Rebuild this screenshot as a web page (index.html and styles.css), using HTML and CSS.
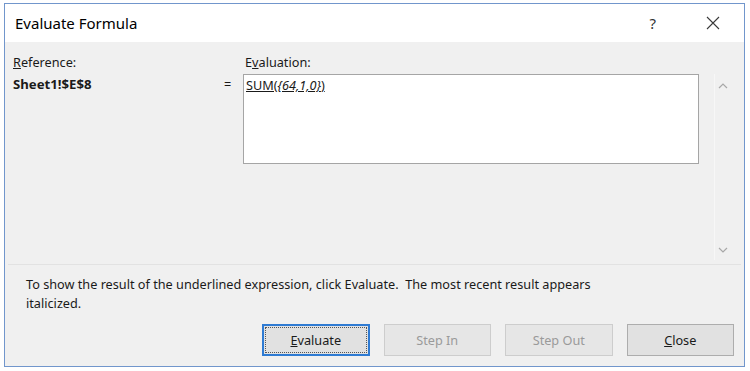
FILE: index.html
```html
<!DOCTYPE html>
<html lang="en">
<head>
    <meta charset="UTF-8">
    <title>Evaluate Formula</title>
    <link rel="stylesheet" href="styles.css">
</head>
<body>
    <div class="window">
        <div class="titlebar">
            <span class="title">Evaluate Formula</span>
            <span class="help">?</span>
            <span class="close-x">
                <svg width="14" height="14" viewBox="0 0 14 14">
                    <path d="M1 1 L13 13 M13 1 L1 13" stroke="#3a3a3a" stroke-width="1.1" fill="none"/>
                </svg>
            </span>
        </div>

        <div class="content">
            <div class="eval-area">
                <div class="label ref-label"><u>R</u>eference:</div>
                <div class="label eval-label">E<u>v</u>aluation:</div>
                <div class="ref-value">Sheet1!$E$8</div>
                <div class="equals">=</div>
                <div class="eval-box">
                    <u>SUM(<i>{64,1,0}</i>)</u>
                </div>
                <div class="scrollbar">
                    <svg width="10" height="6" viewBox="0 0 10 6">
                        <path d="M1 5 L5 1 L9 5" stroke="#a8a8a8" stroke-width="1.2" fill="none"/>
                    </svg>
                    <svg width="10" height="6" viewBox="0 0 10 6">
                        <path d="M1 1 L5 5 L9 1" stroke="#a8a8a8" stroke-width="1.2" fill="none"/>
                    </svg>
                </div>
            </div>

            <div class="footer">
                <p class="hint">To show the result of the underlined expression, click Evaluate.&nbsp; The most recent result appears italicized.</p>
                <div class="buttons">
                    <button class="btn btn-default"><span class="focus"><u>E</u>valuate</span></button>
                    <button class="btn" disabled>Step In</button>
                    <button class="btn" disabled>Step Out</button>
                    <button class="btn"><u>C</u>lose</button>
                </div>
            </div>
        </div>
    </div>
</body>
</html>
```

FILE: styles.css
```css
* {
    margin: 0;
    padding: 0;
    box-sizing: border-box;
}

body {
    font-family: "Noto Sans", "Open Sans", sans-serif;
    font-size: 12.7px;
    color: #1a1a1a;
    background: #fff;
    padding: 3px 0 0 4px;
}

.window {
    width: 741px;
    height: 364px;
    border: 1px solid #7196cc;
    background: #f0f0f0;
    display: flex;
    flex-direction: column;
}

.titlebar {
    height: 38px;
    background: #fff;
    display: flex;
    align-items: center;
    padding-left: 10px;
    flex-shrink: 0;
}

.title {
    font-size: 15px;
    color: #000;
    flex: 1;
}

.help {
    font-size: 15px;
    color: #333;
    margin-right: 50px;
}

.close-x {
    display: flex;
    margin-right: 24px;
}

.content {
    flex: 1;
    display: flex;
    flex-direction: column;
}

.eval-area {
    display: grid;
    grid-template-columns: 210px 20px 456px;
    grid-template-rows: 20px 90px;
    padding: 12px 0 0 5px;
    height: 223px;
    border-bottom: 1px solid #e2e2e2;
    margin: 0 3px;
    position: relative;
}

.label {
    line-height: 16px;
}

.ref-label {
    grid-column: 1 / 3;
}

.eval-label {
    grid-column: 3;
    padding-left: 2px;
}

.ref-value {
    grid-column: 1;
    font-weight: bold;
    font-size: 13.2px;
    padding-top: 1px;
}

.equals {
    grid-column: 2;
    padding-top: 1px;
    padding-left: 1px;
}

.eval-box {
    grid-column: 3;
    background: #fff;
    border: 1px solid #a5a5a5;
    padding: 1px 2px;
    height: 90px;
}

/* scroll arrows sit over the right edge of the panel */
.scrollbar {
    position: absolute;
    left: 706px;
    top: 32px;
    width: 16px;
    height: 186px;
    border-left: 1px solid #f7f7f7;
    display: flex;
    flex-direction: column;
    justify-content: space-between;
    align-items: center;
    padding: 9px 0 7px;
}

.footer {
    padding: 10px 0 0 21px;
}

.hint {
    line-height: 19px;
    width: 600px;
}

.buttons {
    display: flex;
    gap: 14px;
    padding-left: 236px;
    margin-top: 11px;
}

.btn {
    font-family: inherit;
    font-size: 12.7px;
    width: 107.5px;
    height: 32px;
    background: #e1e1e1;
    border: 1px solid #adadad;
    color: #1a1a1a;
}

.btn:disabled {
    background: #e6e6e6;
    border-color: #cdcdcd;
    color: #9a9a9a;
}

.btn-default {
    border: 2px solid #2f7bd3;
    padding: 1px;
}

.focus {
    display: flex;
    align-items: center;
    justify-content: center;
    height: 100%;
    border: 1px dotted #555;
}
```
